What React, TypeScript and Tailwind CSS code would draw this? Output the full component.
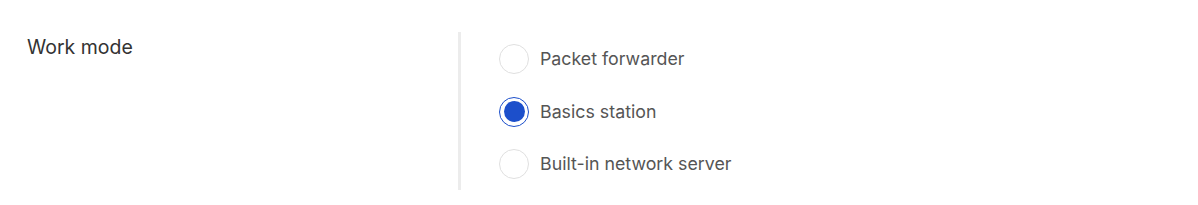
import React, { useState } from "react";

const options = ["Packet forwarder", "Basics station", "Built-in network server"];

export default function App() {
  const [value, setValue] = useState("Basics station");
  return (
    <div className="w-[1198px] h-[205px] bg-white" style={{ fontFamily: "Inter, 'Noto Sans', sans-serif" }}>
      <div className="flex pt-[32px]">
        <div className="w-[431px] ml-[27px] pt-[2px] text-[19.5px] leading-[26px] text-[#333]">Work mode</div>
        <div className="w-[3px] h-[158px] bg-[#ececec]" />
        <div className="flex flex-col pl-[38px] pt-[12px] gap-[22.5px]">
          {options.map((o) => {
            const sel = o === value;
            return (
              <label key={o} className="flex items-center gap-[11px] cursor-pointer" onClick={() => setValue(o)}>
                {sel ? (
                  <span className="w-[30px] h-[30px] rounded-full border-[1.5px] border-[#1c4fcb] flex items-center justify-center">
                    <span className="w-[21px] h-[21px] rounded-full bg-[#1c4fcb]" />
                  </span>
                ) : (
                  <span className="w-[30px] h-[30px] rounded-full border-[1.5px] border-[#e0e0e0] bg-white" />
                )}
                <span className="text-[17.8px] leading-[30px] text-[#555]">{o}</span>
              </label>
            );
          })}
        </div>
      </div>
    </div>
  );
}
